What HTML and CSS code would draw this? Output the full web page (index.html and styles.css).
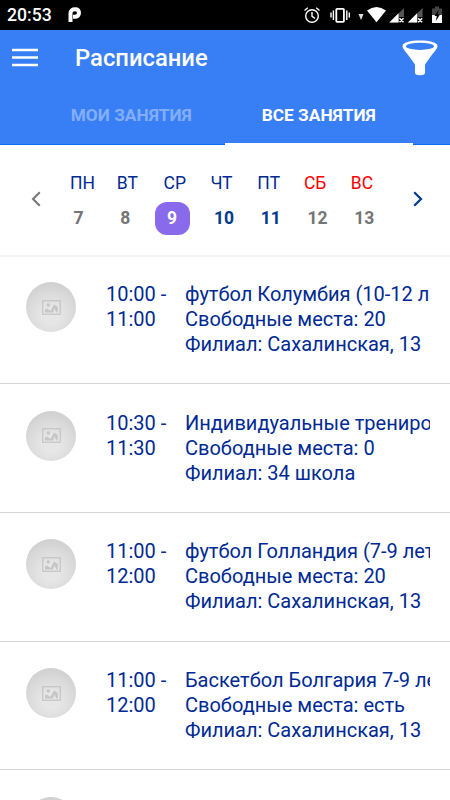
FILE: index.html
```html
<!DOCTYPE html>
<html lang="ru">
<head>
    <meta charset="UTF-8">
    <meta name="viewport" content="width=device-width, initial-scale=1.0">
    <title>Расписание</title>
    <link rel="stylesheet" href="styles.css">
</head>
<body>

    <svg class="sprite">
        <symbol id="photo" viewBox="0 0 19 15">
            <rect x="0.75" y="0.75" width="17.5" height="13.5" fill="none" stroke="#c6c6c6" stroke-width="1.3"/>
            <path d="M3 12.500V9.500l2-1 3.500 2.500L12 4.500l3.800 2.500v5.500h-1.500l-1.800-4-1.500 4z" fill="#c6c6c6"/>
            <circle cx="6.300" cy="5" r="1.700" fill="#c6c6c6"/>
        </symbol>
    </svg>

    <div class="status-bar">
        <span class="clock">20:53</span>
        <svg class="app-icon" width="14" height="16" viewBox="0 0 14 16">
            <path d="M2.500 15V6.500C2.500 3.500 4.500 2.300 7 2.300c2.600 0 4 1.500 4 3.700S9.400 9.700 7 9.700H5" fill="none" stroke="#fff" stroke-width="4" stroke-linejoin="round"/>
        </svg>
        <svg class="status-icons" width="150" height="30" viewBox="0 0 150 30">
            <g fill="none" stroke="#fff" stroke-width="1.400">
                <circle cx="12" cy="16" r="6.300"/>
                <path d="M12 12v4.300l3 2M4.500 10.500l3.300-2.700M19.500 10.500l-3.300-2.700"/>
                <rect x="36.300" y="8.800" width="7.600" height="13" rx="0.800" stroke-width="1.800"/>
                <path d="M33.400 10.500v9.500M46.800 10.500v9.500M31 12.500v5M49.300 12.500v5"/>
            </g>
            <path d="M58.500 14h5l-2.500 6z" fill="#ddd"/>
            <path d="M67 10.500q9.500-7 19 0L76.500 22.300z" fill="#fff"/>
            <path d="M104 8v9h-5v5.500h-9.500zM122.600 8v9h-5v5.500h-9.500z" fill="#555"/>
            <path d="M98.500 13.300v9.200h-9.200zM117.100 13.300v9.200h-9.200z" fill="#fff"/>
            <path d="M99.500 18.300l4 4m0-4l-4 4M118.100 18.300l4 4m0-4l-4 4" stroke="#fff" stroke-width="1.500"/>
            <path d="M132 8.500h3v-2h4v2h3V15h-10z" fill="#444"/>
            <path d="M132 15h10v8h-10z" fill="#fff"/>
            <path d="M138.500 10l-4 6h2.300l-1 5 4.200-6.500h-2.500z" fill="#000"/>
        </svg>
    </div>

    <header class="header">
        <div class="toolbar">
            <svg class="menu" width="26" height="20" viewBox="0 0 26 20">
                <path d="M0 2h26M0 9.500h26M0 17h26" stroke="#fff" stroke-width="2.400"/>
            </svg>
            <h1>Расписание</h1>
            <svg class="filter" width="36" height="36" viewBox="0 0 36 36">
                <path d="M0.500 6C0.500 2.500 8 0.500 18 0.500S35.500 2.500 35.500 6c0 3-4.500 7-8.500 13-2 3-4 4.500-4 6.500V33c0 3-10 3-10 0v-7.500c0-2-2-3.500-4-6.500C5 13 0.500 9 0.500 6z" fill="#fff"/>
                <ellipse cx="18" cy="6.300" rx="14" ry="3.600" fill="#387ef5"/>
            </svg>
        </div>
        <nav class="tabs">
            <a class="tab">МОИ ЗАНЯТИЯ</a>
            <a class="tab active">ВСЕ ЗАНЯТИЯ</a>
        </nav>
    </header>

    <section class="week">
        <svg class="arrow prev" width="10" height="16" viewBox="0 0 10 16">
            <path d="M8.800 1.200L2 8l6.800 6.800" fill="none" stroke="#757575" stroke-width="2"/>
        </svg>
        <div class="days">
            <div class="day"><span class="name">ПН</span><span class="date">7</span></div>
            <div class="day"><span class="name">ВТ</span><span class="date">8</span></div>
            <div class="day"><span class="name">СР</span><span class="date selected">9</span></div>
            <div class="day"><span class="name">ЧТ</span><span class="date open">10</span></div>
            <div class="day"><span class="name">ПТ</span><span class="date open">11</span></div>
            <div class="day weekend"><span class="name">СБ</span><span class="date">12</span></div>
            <div class="day weekend"><span class="name">ВС</span><span class="date">13</span></div>
        </div>
        <svg class="arrow next" width="10" height="16" viewBox="0 0 10 16">
            <path d="M1.200 1.200L8 8l-6.800 6.800" fill="none" stroke="#003a8c" stroke-width="2.200"/>
        </svg>
    </section>

    <main class="lessons">
        <div class="lesson">
            <div class="avatar"><svg width="19" height="15"><use href="#photo"/></svg></div>
            <div class="time">10:00 -<br>11:00</div>
            <div class="info">
                <p>футбол Колумбия (10-12 лет)</p>
                <p>Свободные места: 20</p>
                <p>Филиал: Сахалинская, 13</p>
            </div>
        </div>
        <div class="lesson">
            <div class="avatar"><svg width="19" height="15"><use href="#photo"/></svg></div>
            <div class="time">10:30 -<br>11:30</div>
            <div class="info">
                <p>Индивидуальные тренировки</p>
                <p>Свободные места: 0</p>
                <p>Филиал: 34 школа</p>
            </div>
        </div>
        <div class="lesson">
            <div class="avatar"><svg width="19" height="15"><use href="#photo"/></svg></div>
            <div class="time">11:00 -<br>12:00</div>
            <div class="info">
                <p>футбол Голландия (7-9 лет)</p>
                <p>Свободные места: 20</p>
                <p>Филиал: Сахалинская, 13</p>
            </div>
        </div>
        <div class="lesson">
            <div class="avatar"><svg width="19" height="15"><use href="#photo"/></svg></div>
            <div class="time">11:00 -<br>12:00</div>
            <div class="info">
                <p>Баскетбол Болгария 7-9 лет</p>
                <p>Свободные места: есть</p>
                <p>Филиал: Сахалинская, 13</p>
            </div>
        </div>
        <div class="lesson">
            <div class="avatar"></div>
        </div>
    </main>

</body>
</html>
```

FILE: styles.css
```css
* {
    box-sizing: border-box;
}

body {
    font-family: Roboto, sans-serif;
    background-color: #fff;
    color: #002a93;
    display: flex;
    flex-direction: column;
    height: 100vh;
    margin: 0;
    overflow: hidden;
}

h1, p {
    margin: 0;
}

svg {
    display: block;
    flex-shrink: 0;
}

.sprite {
    display: none;
}

.status-bar {
    display: flex;
    align-items: center;
    flex-shrink: 0;
    height: 30px;
    padding-left: 7px;
    background-color: #000;
    color: #fff;
}

.clock {
    width: 61px;
    font-size: 17.6px;
    font-weight: 500;
    line-height: 32px;
}

.status-icons {
    margin-left: auto;
}

.header {
    flex-shrink: 0;
    height: 115px;
    background-color: #387ef5;
    border-bottom: 1px solid #0c6cfa;
    color: #fff;
}

.toolbar {
    display: flex;
    align-items: center;
    height: 55px;
    padding: 0 12px;
}

.menu {
    margin-top: 1px;
}

h1 {
    margin-left: 37px;
    font-size: 23.8px;
    font-weight: 500;
}

.filter {
    margin-left: auto;
}

.tabs {
    display: flex;
    height: 60px;
    padding: 0 37.5px;
}

.tab {
    flex: 1;
    height: 60px;
    border-bottom: 2px solid transparent;
    font-size: 17.3px;
    font-weight: 700;
    line-height: 60px;
    text-align: center;
    color: rgba(255, 255, 255, 0.4);
}

.tab.active {
    border-color: #fff;
    color: #fff;
}

.week {
    display: flex;
    align-items: center;
    flex-shrink: 0;
    height: 112px;
    padding: 0 27px 0 30.5px;
    border-bottom: 2px solid #f3f3f3;
}

.arrow {
    margin-top: -2px;
}

.days {
    display: flex;
    margin: 6px 0 0 20.5px;
}

.day {
    width: 46.8px;
}

.name, .date {
    display: block;
    font-size: 17.5px;
}

.name {
    padding-left: 9px;
    line-height: 24px;
    color: #002a93;
}

.weekend .name {
    color: #f00;
}

.date {
    width: 35px;
    height: 33px;
    margin-top: 7px;
    padding-left: 12.5px;
    font-weight: 700;
    line-height: 32px;
    color: #757575;
}

.date.open {
    color: #003a8c;
}

.date.selected {
    border-radius: 12px;
    background-color: #886aea;
    color: #fff;
}

.next {
    margin-left: auto;
}

.lesson {
    display: flex;
    height: 128.75px;
    padding: 26.6px 20px 0 26px;
    border-bottom: 1.5px solid #d6d6d6;
    font-size: 20px;
    line-height: 25px;
}

.lesson:first-child {
    height: 127px;
    padding-top: 25px;
}

.avatar {
    display: flex;
    align-items: center;
    justify-content: center;
    flex-shrink: 0;
    width: 50px;
    height: 50px;
    border-radius: 50%;
    background: radial-gradient(circle at 50% 66%, #e6e6e6 20%, #dadada 55%, #c6c6c6 100%);
}

.time {
    flex-shrink: 0;
    width: 79px;
    margin-left: 30px;
}

.info {
    flex: 1;
    min-width: 0;
}

.info p {
    overflow: hidden;
    white-space: nowrap;
}
```
